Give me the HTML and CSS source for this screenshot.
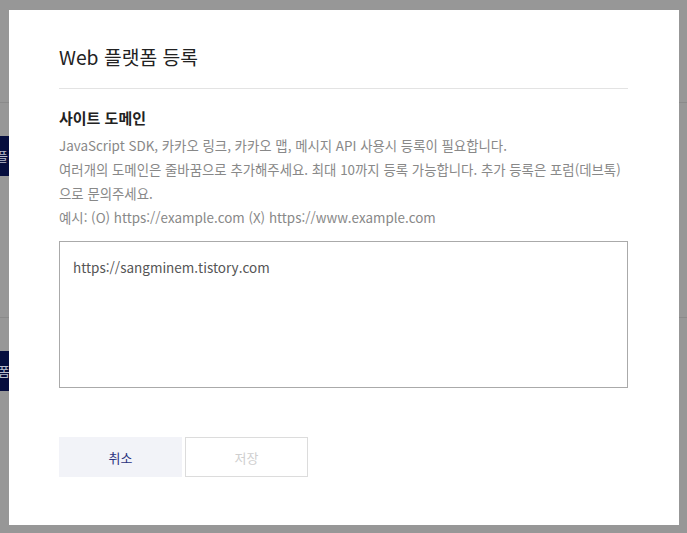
FILE: index.html
```html
<!DOCTYPE html>
<html lang="ko">
<head>
<meta charset="utf-8">
<link rel="stylesheet" href="styles.css">
</head>
<body>
<div class="page">
  <div class="row row-top"></div>
  <div class="row row-a"><span class="nav-btn nav-btn-1">플랫폼</span></div>
  <div class="row row-b"><span class="nav-btn nav-btn-2">플랫폼</span></div>
  <div class="row row-c"></div>
</div>
<div class="overlay">
  <div class="modal">
    <h1 class="modal-title">Web 플랫폼 등록</h1>
    <h2 class="section-title">사이트 도메인</h2>
    <p class="desc">JavaScript SDK, 카카오 링크, 카카오 맵, 메시지 API 사용시 등록이 필요합니다.<br>여러개의 도메인은 줄바꿈으로 추가해주세요. 최대 10까지 등록 가능합니다. 추가 등록은 포럼(데브톡)<br>으로 문의주세요.<br>예시: (O) https://example.com (X) https://www.example.com</p>
    <div class="textarea">https://sangminem.tistory.com</div>
    <div class="actions">
      <button class="btn btn-cancel">취소</button>
      <button class="btn btn-save">저장</button>
    </div>
  </div>
</div>
</body>
</html>
```

FILE: styles.css
```css
* { box-sizing: border-box; }
html, body { margin: 0; padding: 0; }
body {
  width: 687px;
  height: 533px;
  overflow: hidden;
  background: #979797;
  font-family: "Noto Sans CJK KR", "Noto Sans", sans-serif;
}
.page {
  display: flex;
  flex-direction: column;
}
.row {
  border-bottom: 1px solid #8a8a8a;
}
.row-top { height: 103px; }
.row-a { height: 215px; padding-top: 33px; }
.row-b { height: 215px; padding-top: 33px; border-bottom: none; }
.nav-btn {
  display: block;
  width: 60px;
  height: 40px;
  margin-left: -51px;
  background: #050d3e;
  color: #b8bccc;
  font-size: 13px;
  line-height: 40px;
  white-space: nowrap;
  overflow: hidden;
}
.nav-btn-1 { padding-left: 47px; }
.nav-btn-2 { padding-left: 25px; }
.overlay {
  position: fixed;
  inset: 0;
  display: flex;
  align-items: flex-start;
  padding: 10px 8px 8px 9px;
}
.modal {
  width: 670px;
  height: 515px;
  background: #fff;
  padding: 32px 51px 0 50px;
}
.modal-title {
  margin: 0;
  font-size: 19.3px;
  font-weight: 400;
  color: #222;
  line-height: 30px;
  padding-bottom: 16px;
  border-bottom: 1px solid #e3e3e3;
}
.section-title {
  margin: 18px 0 0;
  font-size: 15px;
  font-weight: 700;
  color: #222;
  line-height: 22px;
}
.desc {
  margin: 4px 0 0;
  font-size: 13.4px;
  color: #888;
  line-height: 24px;
}
.textarea {
  margin-top: 12px;
  height: 147px;
  border: 1px solid #aaa;
  padding: 13px 13px;
  font-size: 13.5px;
  color: #555;
  line-height: 24px;
}
.actions {
  margin-top: 49px;
  display: flex;
  gap: 3px;
}
.btn {
  width: 123px;
  height: 40px;
  font-family: inherit;
  font-size: 13px;
  border: 1px solid transparent;
  background: #fff;
  padding: 0;
}
.btn-cancel {
  background: #f2f3f8;
  color: #2b3380;
  border-color: #f2f3f8;
}
.btn-save {
  border-color: #dcdcdc;
  color: #cfcfcf;
}
```
